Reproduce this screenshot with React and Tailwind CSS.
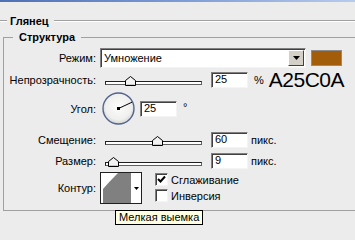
import React from "react";

const sunken =
  "border border-t-[#808080] border-l-[#808080] border-r-[#f4f4f4] border-b-[#f4f4f4] shadow-[inset_1px_1px_0_#404040] bg-white";

function Line({ className = "" }) {
  return <div className={"h-[2px] border-t border-t-[#a0a0a0] border-b border-b-white " + className} />;
}

function Label({ children }) {
  return <div className="w-[92px] shrink-0 text-right">{children}</div>;
}

function Input({ value, className = "" }) {
  return (
    <div className={sunken + " w-[37px] h-[16px] shrink-0 pl-[3px] leading-[13px] " + className}>
      {value}
    </div>
  );
}

function Thumb() {
  return (
    <svg width="11" height="10" viewBox="0 0 11 10">
      <path d="M0.5 9.5 V4.5 L5.5 0.5 L10.5 4.5 V9.5 Z" fill="#f2f2f2" stroke="#000" strokeWidth="1" />
      <path d="M1.5 8.5 H9.5" stroke="#c8c8c8" strokeWidth="1" />
    </svg>
  );
}

function Slider({ pos, className = "" }) {
  return (
    <div className={"relative w-[97px] h-[16px] shrink-0 " + className}>
      <div className="mt-[9px] h-[4px] bg-white border border-t-[#202020] border-l-[#202020] border-b-[#606060] border-r-[#606060]" />
      <div className={"absolute top-[4px] " + pos}>
        <Thumb />
      </div>
    </div>
  );
}

function Checkbox({ checked }) {
  return (
    <div className={sunken + " w-[13px] h-[13px] shrink-0 flex items-center justify-center"}>
      {checked && (
        <svg width="9" height="9" viewBox="0 0 9 9">
          <path d="M1 4 L3.5 6.5 L8 1.5" fill="none" stroke="#000" strokeWidth="2" />
        </svg>
      )}
    </div>
  );
}

export default function App() {
  return (
    <div className="relative w-[355px] h-[240px] overflow-hidden bg-[#ececec] text-[11px] leading-[14px] text-black font-['Liberation_Sans',Arial,sans-serif]">
      <div className="h-[2px] bg-linear-to-r from-[#4f70b4] via-[#7c9ad4] to-[#b7cbec]" />

      <div className="flex items-center h-[14px] mt-[12px]">
        <Line className="w-[7px]" />
        <span className="ml-[3px] font-bold">Глянец</span>
        <Line className="ml-[5px] flex-1" />
      </div>

      <fieldset className="ml-[3px] mt-[2px] w-[370px] border-t border-l border-b border-[#a0a0a0]">
        <legend className="ml-[9px] px-[6px] font-bold leading-[14px]">Структура</legend>

        <div className="flex flex-col pb-[6px]">
          {/* Режим */}
          <div className="flex items-center h-[20px] mt-[4px]">
            <Label>Режим:</Label>
            <div className={sunken + " ml-[4px] w-[206px] h-[20px] flex items-center"}>
              <span className="pl-[3px] flex-1">Умножение</span>
              <div className="w-[16px] h-[16px] mr-[1px] bg-[#d4d0c8] border border-t-white border-l-white border-r-[#404040] border-b-[#404040] flex items-center justify-center">
                <svg width="7" height="4" viewBox="0 0 7 4">
                  <path d="M0 0 H7 L3.5 4 Z" fill="#000" />
                </svg>
              </div>
            </div>
            <div className="ml-[5px] w-[31px] h-[16px] bg-[#a25c0a] border border-[#8c8c8c]" />
          </div>

          {/* Непрозрачность */}
          <div className="flex items-center h-[16px] mt-[4px]">
            <Label>Непрозрачность:</Label>
            <Slider pos="left-[20px]" className="ml-[9px]" />
            <Input value="25" className="ml-[9px]" />
            <span className="ml-[6px]">%</span>
            <span className="ml-[5px] text-[21px] leading-[16px] tracking-[-0.5px]">A25C0A</span>
          </div>

          {/* Угол */}
          <div className="flex items-center h-[33px] mt-[4px]">
            <Label>Угол:</Label>
            <svg width="33" height="33" viewBox="0 0 33 33" className="ml-[6px] shrink-0">
              <defs>
                <radialGradient id="dialg" cx="50%" cy="45%" r="55%">
                  <stop offset="0" stopColor="#fcfcfc" />
                  <stop offset="0.75" stopColor="#efefed" />
                  <stop offset="1" stopColor="#d2d2d2" />
                </radialGradient>
              </defs>
              <circle cx="16.5" cy="16.5" r="15.5" fill="url(#dialg)" stroke="#52648f" strokeWidth="1.4" />
              <line x1="16.5" y1="16.5" x2="30" y2="10.2" stroke="#000" strokeWidth="1" />
              <rect x="15" y="15" width="3" height="3" fill="#000" />
            </svg>
            <Input value="25" className="ml-[5px]" />
            <span className="ml-[6px] self-start mt-[8px]">°</span>
          </div>

          {/* Смещение */}
          <div className="flex items-center h-[16px] mt-[7px]">
            <Label>Смещение:</Label>
            <Slider pos="left-[47px]" className="ml-[9px]" />
            <Input value="60" className="ml-[9px]" />
            <span className="ml-[3px]">пикс.</span>
          </div>

          {/* Размер */}
          <div className="flex items-center h-[16px] mt-[5px]">
            <Label>Размер:</Label>
            <Slider pos="left-[3px]" className="ml-[9px]" />
            <Input value="9" className="ml-[9px]" />
            <span className="ml-[3px]">пикс.</span>
          </div>

          {/* Контур */}
          <div className="flex items-center h-[32px] mt-[3px]">
            <Label>Контур:</Label>
            <div className="ml-[4px] w-[42px] h-[32px] shrink-0 border border-[#202020] bg-white">
              <svg width="40" height="30" viewBox="0 0 40 30">
                <path d="M2 30 V16 Q8 9 17 0 H30 V30 Z" fill="#808080" />
                <path d="M33 14 H38 L35.5 17 Z" fill="#000" />
              </svg>
            </div>
            <div className="ml-[13px] self-start mt-[1px] flex flex-col gap-[3px]">
              <div className="flex items-center h-[13px]">
                <Checkbox checked />
                <span className="ml-[3px]">Сглаживание</span>
              </div>
              <div className="flex items-center h-[13px]">
                <Checkbox />
                <span className="ml-[3px]">Инверсия</span>
              </div>
            </div>
          </div>
        </div>
      </fieldset>

      <div className="absolute left-[115px] top-[210px] h-[15px] px-[3px] border border-black bg-[#ffffe1] leading-[13px] whitespace-nowrap">
        Мелкая выемка
      </div>
    </div>
  );
}
